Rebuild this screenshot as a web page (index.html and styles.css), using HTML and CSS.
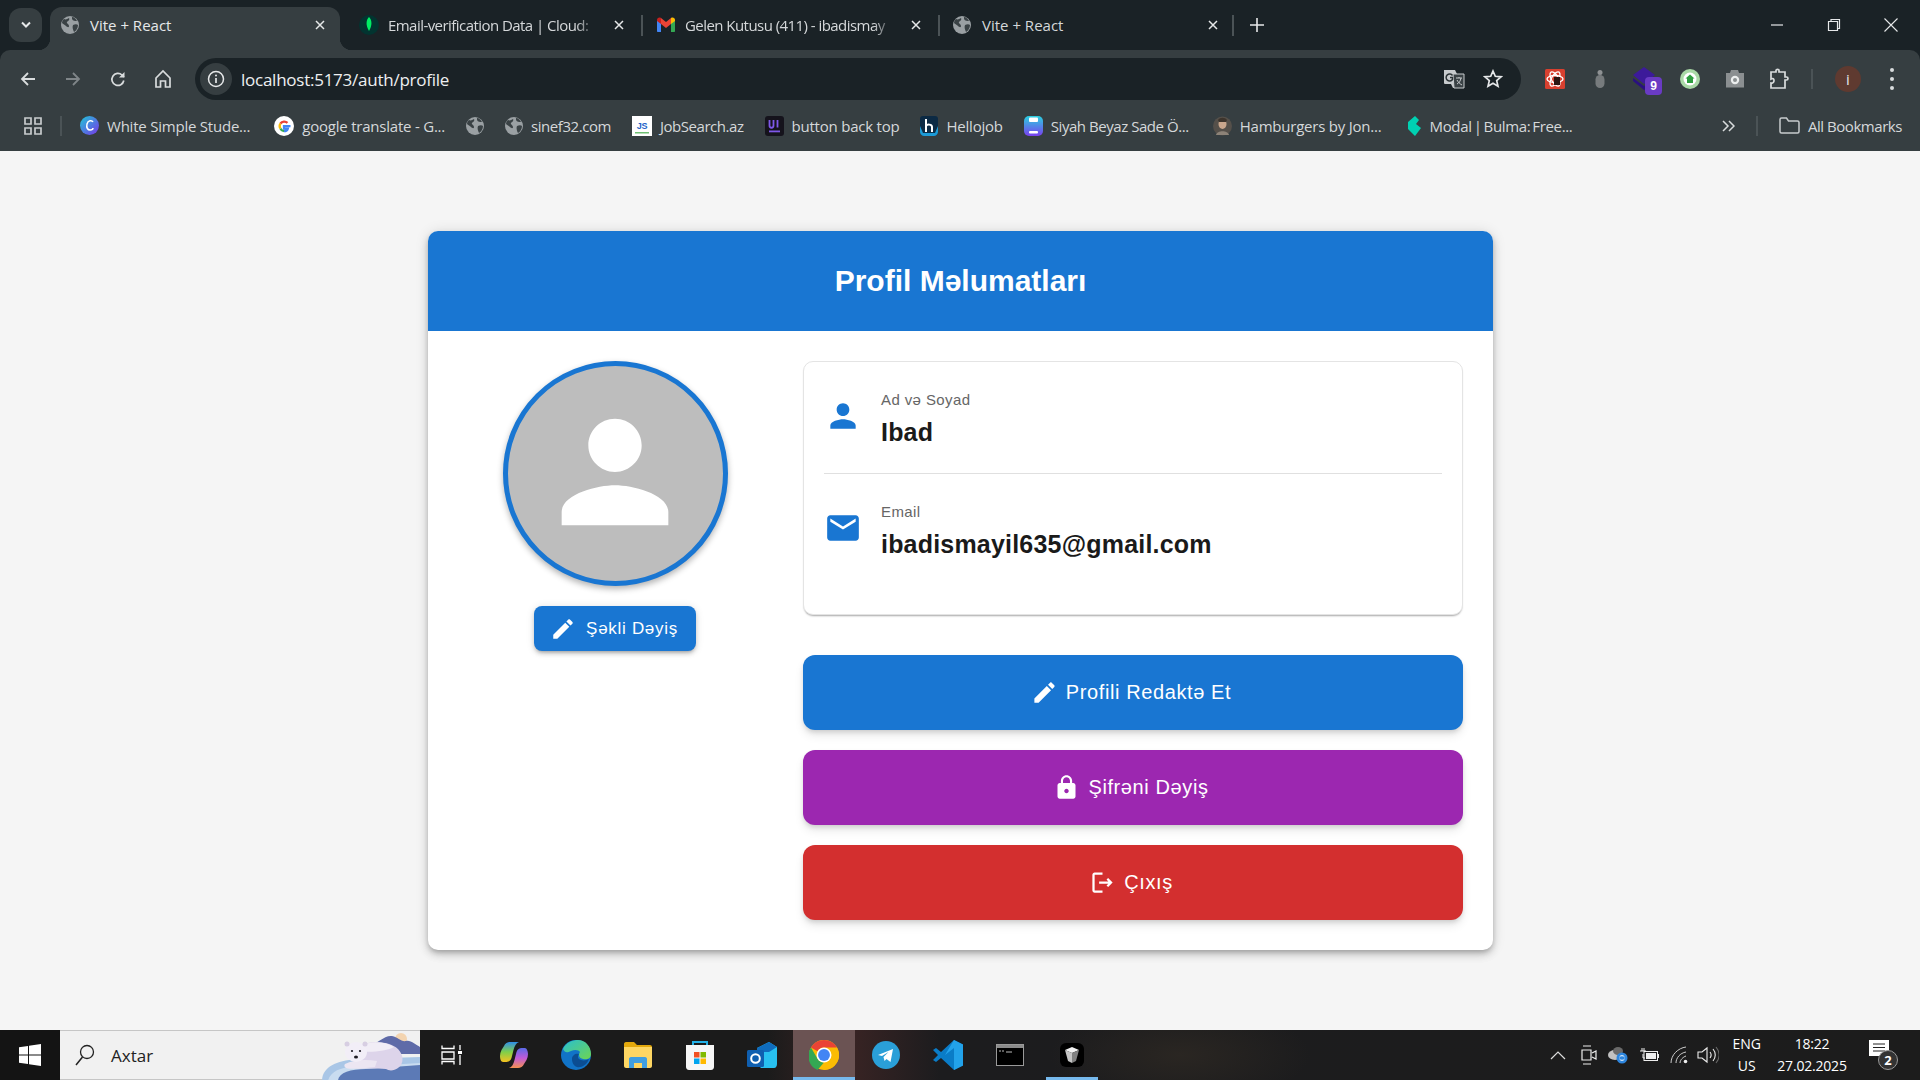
FILE: index.html
```html
<!DOCTYPE html>
<html lang="az">
<head>
<meta charset="utf-8">
<title>Vite + React</title>
<link rel="stylesheet" href="styles.css">
</head>
<body>
<svg class="defs" width="0" height="0">
  <symbol id="globe" viewBox="0 0 18 18"><circle cx="9" cy="9" r="9" fill="#9aa0a3"/><path d="M3 3c2 1 3 0 5-1 1 2-1 3-2 4s2 2 2 4-2 1-3 0-3-2-4-3c0-2 1-3 2-4zM12 9c2-1 4-1 5 0 0 3-2 6-4 7-1-2-2-5-1-7zM11 1c2 0 4 2 5 4-2 0-4 0-5-2z" fill="#3a4245"/></symbol>
  <symbol id="close" viewBox="0 0 12 12"><path d="M2 2l8 8M10 2l-8 8" fill="none" stroke="#e6e8e9" stroke-width="1.5"/></symbol>
  <symbol id="pencil" viewBox="0 0 24 24"><path d="M3 17.25V21h3.75L17.81 9.94l-3.75-3.75L3 17.25zM20.71 7.04c.39-.39.39-1.02 0-1.41l-2.34-2.34c-.39-.39-1.02-.39-1.41 0l-1.83 1.83 3.75 3.75 1.83-1.83z" fill="#fff"/></symbol>
  <symbol id="person" viewBox="0 0 24 24"><path d="M12 12c2.21 0 4-1.79 4-4s-1.79-4-4-4-4 1.79-4 4 1.79 4 4 4zm0 2c-2.67 0-8 1.34-8 4v2h16v-2c0-2.66-5.33-4-8-4z"/></symbol>
</svg>

<header class="browser">
  <div class="tabstrip">
    <div class="tabsearch"><svg width="12" height="8" viewBox="0 0 12 8"><path d="M2 1.5l4 4 4-4" fill="none" stroke="#e6e8e9" stroke-width="2"/></svg></div>
    <div class="tab tab-active">
      <svg class="fav" width="18" height="18"><use href="#globe"/></svg>
      <span class="tabtitle">Vite + React</span>
      <svg class="tabclose" width="12" height="12"><use href="#close"/></svg>
    </div>
    <div class="tab">
      <svg class="fav fav-wide" width="20" height="20" viewBox="0 0 20 20"><circle cx="10" cy="10" r="10" fill="#023430"/><path d="M10 2c3 3 3.500 8 0 14-3.500-6-3-11 0-14z" fill="#00ed64"/></svg>
      <span class="tabtitle tabtitle-fade">Email-verification Data | Cloud:</span>
      <svg class="tabclose" width="12" height="12"><use href="#close"/></svg>
    </div>
    <div class="tab tab-sep">
      <svg class="fav fav-wide" width="20" height="16" viewBox="0 0 20 16"><path d="M1 3v11c0 .6.400 1 1 1h3V6z" fill="#4285f4"/><path d="M19 3v11c0 .6-.4 1-1 1h-3V6z" fill="#34a853"/><path d="M15 1v6l4-3V3c0-2-2-3-4-2z" fill="#fbbc04"/><path d="M5 1v6l5 4 5-4V1l-5 4z" fill="#ea4335"/><path d="M1 3v1l4 3V1C3 0 1 1 1 3z" fill="#c5221f"/></svg>
      <span class="tabtitle tabtitle-fade">Gelen Kutusu (411) - ibadismay</span>
      <svg class="tabclose" width="12" height="12"><use href="#close"/></svg>
    </div>
    <div class="tab tab-sep tab-last">
      <svg class="fav" width="18" height="18"><use href="#globe"/></svg>
      <span class="tabtitle">Vite + React</span>
      <svg class="tabclose" width="12" height="12"><use href="#close"/></svg>
    </div>
    <div class="newtab"><svg width="14" height="14" viewBox="0 0 14 14"><path d="M7 0v14M0 7h14" stroke="#e6e8e9" stroke-width="1.600"/></svg></div>
    <div class="winctrls">
      <svg width="14" height="14" viewBox="0 0 14 14"><path d="M1 7h12" stroke="#e6e8e9" stroke-width="1.200"/></svg>
      <svg width="14" height="14" viewBox="0 0 14 14"><path d="M1.500 3.500h9v9h-9zM4 3.500V1.500h8.500v9h-2" fill="none" stroke="#e6e8e9" stroke-width="1.200"/></svg>
      <svg width="14" height="14" viewBox="0 0 14 14"><path d="M.5.500l13 13M13.500.500l-13 13" stroke="#e6e8e9" stroke-width="1.100"/></svg>
    </div>
  </div>

  <div class="toolbar">
    <div class="navcell"><svg width="18" height="18" viewBox="0 0 18 18"><path d="M16 9H3M9 3L3 9l6 6" fill="none" stroke="#d9dcdd" stroke-width="1.800"/></svg></div>
    <div class="navcell"><svg width="18" height="18" viewBox="0 0 18 18"><path d="M2 9h13M9 3l6 6-6 6" fill="none" stroke="#7f8588" stroke-width="1.800"/></svg></div>
    <div class="navcell"><svg width="18" height="18" viewBox="0 0 18 18"><path d="M14.800 10.500A6 6 0 1 1 13 5L15 7" fill="none" stroke="#d9dcdd" stroke-width="1.700"/><path d="M15.500 2v5.500H10z" fill="#d9dcdd"/></svg></div>
    <div class="navcell"><svg width="18" height="20" viewBox="0 0 18 20"><path d="M2 9l7-7 7 7v9h-4.500v-6h-5v6H2z" fill="none" stroke="#d9dcdd" stroke-width="1.700"/></svg></div>
    <div class="omnibox">
      <div class="siteinfo"><svg width="18" height="18" viewBox="0 0 18 18"><circle cx="9" cy="9" r="7.500" fill="none" stroke="#e6e8e9" stroke-width="1.500"/><path d="M9 8v5" stroke="#e6e8e9" stroke-width="1.700"/><circle cx="9" cy="5.500" r="1" fill="#e6e8e9"/></svg></div>
      <span class="url">localhost:5173/auth/profile</span>
      <div class="omni-right">
        <svg width="22" height="22" viewBox="0 0 22 22"><path d="M1 2h11l2 4h5c1 0 2 1 2 2v12H10l-2-4H2c-1 0-1-1-1-1z" fill="#c7cbcd"/><path d="M10 6h11v14H11z" fill="#3a4245" stroke="#c7cbcd"/><path d="M9.500 7.500A3.500 3.500 0 1 0 9.500 11.500V9.500H7" fill="none" stroke="#2b3336" stroke-width="1.500"/><path d="M13 10h6M16 9v1M18 10c-.5 3-2 5-4 6M14 12c1 2 3 4 5 5" fill="none" stroke="#c7cbcd" stroke-width="1"/></svg>
        <svg width="20" height="20" viewBox="0 0 20 20"><path d="M10 2l2.300 5.300 5.700.500-4.300 3.800 1.300 5.600L10 14.300l-5 2.900 1.300-5.600L2 7.800l5.700-.5z" fill="none" stroke="#e6e8e9" stroke-width="1.700"/></svg>
      </div>
    </div>
    <div class="extensions">
      <div class="navcell"><svg width="20" height="20" viewBox="0 0 20 20"><rect width="20" height="20" rx="1.500" fill="#d8402f"/><g fill="none" stroke="#fff" stroke-width="1.300"><ellipse cx="10" cy="10" rx="8" ry="3.500"/><ellipse cx="10" cy="10" rx="8" ry="3.500" transform="rotate(60 10 10)"/><ellipse cx="10" cy="10" rx="8" ry="3.500" transform="rotate(120 10 10)"/></g><path d="M9 8h6v8H9z" fill="#2b1512"/></svg></div>
      <div class="navcell"><svg width="14" height="20" viewBox="0 0 14 20"><circle cx="7" cy="3.500" r="2.500" fill="#8e9193"/><rect x="2.500" y="6" width="9" height="13" rx="4.500" fill="#777b7d"/></svg></div>
      <div class="navcell ext-badged"><svg width="22" height="24" viewBox="0 0 22 24"><path d="M11 0l11 8-11 9L0 8z" fill="#3c1a9a"/><path d="M0 11l11 8 6-5v6l-6 3-11-9z" fill="#2a1080"/></svg><span class="badge">9</span></div>
      <div class="navcell"><svg width="20" height="20" viewBox="0 0 20 20"><circle cx="10" cy="10" r="10" fill="#a9d9a6"/><circle cx="10" cy="10" r="6.500" fill="#fff"/><path d="M10 5.500l4.500 4H13V14H7V9.500H5.500z" fill="#2e9e3f"/></svg></div>
      <div class="navcell"><svg width="20" height="18" viewBox="0 0 20 18"><path d="M1 3h4l1-3h7l1 3h5v14.500H1z" fill="#8b8f91"/><circle cx="10" cy="10" r="4.200" fill="#eceeee"/><circle cx="10" cy="10" r="2" fill="#8b8f91"/></svg></div>
      <div class="navcell"><svg width="22" height="22" viewBox="0 0 22 22"><path d="M2 4h5V2.500C7 1 10 1 10 2.500V4h6v5h1.500c2 0 2 3 0 3H16v8H2v-5c2 .5 3-1 3-2.500S4 10 2 11z" fill="none" stroke="#d9dcdd" stroke-width="1.700"/></svg></div>
      <span class="tool-sep"></span>
      <div class="avatar-chip">i</div>
      <div class="dots"><i></i><i></i><i></i></div>
    </div>
  </div>

  <nav class="bookmarks">
    <svg class="apps" width="18" height="18" viewBox="0 0 18 18"><path d="M1 1h6v6H1zM11 1h6v6h-6zM1 11h6v6H1zM11 11h6v6h-6z" fill="none" stroke="#c7cbcd" stroke-width="1.700"/></svg>
    <span class="bm-sep"></span>
    <a class="bm bm-pad"><svg width="19" height="19" viewBox="0 0 19 19"><defs><linearGradient id="cv" x1="0" y1="0" x2="1" y2="1"><stop offset="0" stop-color="#1ec8d8"/><stop offset="1" stop-color="#7a34e8"/></linearGradient></defs><circle cx="9.500" cy="9.500" r="9.500" fill="url(#cv)"/><path d="M13 6c-1-2-5-2-6 2s1 6 3 6 3-1 3-2" fill="none" stroke="#fff" stroke-width="1.500"/></svg><span>White Simple Stude...</span></a>
    <a class="bm"><svg width="20" height="20" viewBox="0 0 20 20"><circle cx="10" cy="10" r="10" fill="#fff"/><path d="M16.500 10.200H10v2.400h3.800c-.4 1.600-1.900 2.600-3.800 2.600" fill="none" stroke="#4285f4" stroke-width="2.300"/><path d="M6.400 12.500A4.800 4.800 0 0 0 10 15.200" fill="none" stroke="#34a853" stroke-width="2.300"/><path d="M6.400 12.500a4.800 4.800 0 0 1 0-5" fill="none" stroke="#fbbc04" stroke-width="2.300"/><path d="M6.400 7.500A4.800 4.800 0 0 1 13.500 6.800" fill="none" stroke="#ea4335" stroke-width="2.300"/></svg><span>google translate - G...</span></a>
    <a class="bm bm-iconly"><svg width="18" height="18"><use href="#globe"/></svg></a>
    <a class="bm"><svg width="18" height="18"><use href="#globe"/></svg><span class="bm-tight">sinef32.com</span></a>
    <a class="bm"><svg width="20" height="20" viewBox="0 0 20 20"><rect width="20" height="20" fill="#fff"/><text class="fav-js" x="10" y="13">JS</text><rect x="3" y="16" width="14" height="1.500" fill="#6fbf73"/></svg><span class="bm-tight">JobSearch.az</span></a>
    <a class="bm"><svg width="19" height="20" viewBox="0 0 19 20"><rect width="19" height="20" rx="3" fill="#15131c"/><path d="M4.500 4v5.500c0 3 4 3 4 0V4M12.500 4v7.500" fill="none" stroke="#7e57e8" stroke-width="1.800"/><rect x="4" y="14.500" width="11" height="1.800" fill="#7e57e8"/></svg><span>button back top</span></a>
    <a class="bm"><svg width="18" height="20" viewBox="0 0 18 20"><path d="M0 3c0-2 1-3 3-3h12c2 0 3 1 3 3v12c0 3-2 5-5 5H5c-3 0-5-2-5-5z" fill="#0c2a44"/><path d="M0 10l3 7h12l3-7v6c0 2-2 4-4 4H4c-2 0-4-2-4-4z" fill="#1c9ad6"/><path d="M6 3v13M6 10c1-2 6-2 6 1v5" fill="none" stroke="#fff" stroke-width="2"/></svg><span>Hellojob</span></a>
    <a class="bm bm-pad"><svg width="19" height="20" viewBox="0 0 19 20"><defs><linearGradient id="sy" x1="0" y1="0" x2="0" y2="1"><stop offset="0" stop-color="#2ad0df"/><stop offset="1" stop-color="#7a3ff0"/></linearGradient></defs><rect width="19" height="20" rx="5" fill="url(#sy)"/><rect x="5" y="1.500" width="9" height="4.500" rx="1" fill="#fff"/><rect x="5" y="15" width="9" height="2.500" rx="1" fill="#fff"/></svg><span class="bm-tight">Siyah Beyaz Sade Ö...</span></a>
    <a class="bm bm-pad"><svg width="19" height="20" viewBox="0 0 19 20"><circle cx="9.500" cy="10" r="9.500" fill="#55504a"/><ellipse cx="9.500" cy="8" rx="4" ry="5" fill="#c9a68c"/><path d="M5 4c2-3 7-3 9 0l-1 2H6z" fill="#3d342c"/><path d="M3 19c1-5 12-5 13 0z" fill="#8d8378"/></svg><span>Hamburgers by Jon...</span></a>
    <a class="bm"><svg width="16" height="20" viewBox="0 0 16 20"><path d="M2 6l7-6 4 4-3 4 5 4-6 8-7-7z" fill="#00d1b2"/></svg><span class="bm-modal">Modal | Bulma: Free...</span></a>
    <div class="bm-end">
      <svg width="14" height="12" viewBox="0 0 14 12"><path d="M2 1l5 5-5 5M8 1l5 5-5 5" fill="none" stroke="#d9dcdd" stroke-width="1.500"/></svg>
      <span class="bm-sep bm-sep-end"></span>
      <a class="bm"><svg width="21" height="17" viewBox="0 0 21 17"><path d="M1 2.500c0-.8.700-1.500 1.500-1.500h5l2 3h9c.8 0 1.500.7 1.500 1.500v9c0 .8-.7 1.500-1.500 1.500h-16C1.700 16 1 15.300 1 14.500z" fill="none" stroke="#c7cbcd" stroke-width="1.500"/></svg><span class="bm-tight">All Bookmarks</span></a>
    </div>
  </nav>
</header>

<main class="page">
  <section class="card">
    <h1 class="card-title">Profil Məlumatları</h1>
    <div class="card-body">
      <div class="avatar-col">
        <div class="avatar"><svg class="avatar-icon" width="160" height="160"><use href="#person"/></svg></div>
        <button class="btn-photo"><svg width="26" height="26"><use href="#pencil"/></svg><span>Şəkli Dəyiş</span></button>
      </div>
      <div class="detail-col">
        <div class="info">
          <div class="row row-first">
            <svg class="row-icon" width="38" height="38"><use href="#person"/></svg>
            <div><div class="row-label">Ad və Soyad</div><div class="row-value">Ibad</div></div>
          </div>
          <div class="row">
            <svg class="row-icon" width="38" height="38" viewBox="0 0 24 24"><path d="M20 4H4c-1.100 0-1.990.9-1.990 2L2 18c0 1.100.9 2 2 2h16c1.100 0 2-.9 2-2V6c0-1.100-.9-2-2-2zm0 4l-8 5-8-5V6l8 5 8-5v2z"/></svg>
            <div><div class="row-label">Email</div><div class="row-value">ibadismayil635@gmail.com</div></div>
          </div>
        </div>
        <div class="actions">
          <button class="btn btn-blue"><svg width="27" height="27"><use href="#pencil"/></svg><span>Profili Redaktə Et</span></button>
          <button class="btn btn-purple"><svg width="27" height="27" viewBox="0 0 24 24"><path fill="#fff" d="M18 8h-1V6c0-2.760-2.240-5-5-5S7 3.240 7 6v2H6c-1.100 0-2 .9-2 2v10c0 1.100.9 2 2 2h12c1.100 0 2-.9 2-2V10c0-1.100-.9-2-2-2zm-6 9c-1.100 0-2-.9-2-2s.9-2 2-2 2 .9 2 2-.9 2-2 2zm3.100-9H8.900V6c0-1.710 1.390-3.100 3.100-3.100 1.710 0 3.100 1.390 3.100 3.100v2z"/></svg><span>Şifrəni Dəyiş</span></button>
          <button class="btn btn-red"><svg width="27" height="27" viewBox="0 0 24 24"><path fill="#fff" d="M17 8l-1.410 1.410L17.170 11H9v2h8.170l-1.580 1.580L17 16l4-4zM5 5h7V3H5c-1.100 0-2 .9-2 2v14c0 1.100.9 2 2 2h7v-2H5V5z"/></svg><span>Çıxış</span></button>
        </div>
      </div>
    </div>
  </section>
</main>

<footer class="taskbar">
  <div class="start"><svg width="22" height="22" viewBox="0 0 22 22"><path d="M0 3.200l9-1.300v8.500H0zM10 1.800L22 0v10.400H10zM0 11.600h9v8.500l-9-1.300zM10 11.600h12V22l-12-1.800z" fill="#fff"/></svg></div>
  <div class="search">
    <svg width="22" height="24" viewBox="0 0 22 24"><circle cx="13" cy="9" r="6.500" fill="none" stroke="#222" stroke-width="1.300"/><path d="M8.500 14L2 22" stroke="#222" stroke-width="1.500"/></svg>
    <span>Axtar</span>
    <svg class="bear" width="98" height="50" viewBox="0 0 98 50">
      <circle cx="79" cy="8" r="6" fill="#f3d4b0"/>
      <path d="M46 15C56 13 62 4 70 5c6 1 9 6 14 5 5-1 10 4 14 6v7H50z" fill="#5f6ba8"/>
      <path d="M0 50c0-14 14-20 34-22l64-2v24z" fill="#a9c6e6"/>
      <path d="M6 50c2-9 12-14 26-14l66-4v18z" fill="#c9dcf0"/>
      <path d="M16 50c0-8 12-12 28-12l54-4v16z" fill="#5c7ab6"/>
      <path d="M34 16c10-6 32-7 42 2 6 6 6 15 0 19-4 3-9 3-12 1-10-1-24 0-30-1z" fill="#ddd4ea"/>
      <path d="M40 14c10-4 24-4 32 2-6 4-26 6-34 4z" fill="#f1edf6"/>
      <path d="M23 33c8-4 20-5 32-3l-2 6c-10 1-22 3-29 1-2-1-2-3-1-4z" fill="#ece6f2"/>
      <ellipse cx="34" cy="21" rx="11" ry="10" fill="#f2eef7"/>
      <circle cx="25" cy="13" r="2.500" fill="#d7cee2"/><circle cx="43" cy="13" r="2.500" fill="#d7cee2"/>
      <circle cx="30" cy="20" r="1.100" fill="#1d1a22"/><circle cx="38" cy="20" r="1.100" fill="#1d1a22"/><ellipse cx="34" cy="26" rx="2" ry="1.500" fill="#1d1a22"/>
    </svg>
  </div>
  <div class="apps-row">
    <div class="tb"><svg width="22" height="20" viewBox="0 0 22 20" fill="none" stroke="#fff" stroke-width="1.300"><path d="M1 .5v3h12v-3M1 19.500v-3h12v3M1 7h12v7H1zM19 0v5M19 10v10"/><rect x="17" y="6" width="4" height="3" fill="#fff" stroke="none"/></svg></div>
    <div class="tb"><svg width="28" height="28" viewBox="0 0 28 28"><defs><linearGradient id="co" x1="0" y1="0" x2="0" y2="1"><stop offset="0" stop-color="#2f8ee8"/><stop offset=".5" stop-color="#7fcf4a"/><stop offset="1" stop-color="#f5c21f"/></linearGradient><linearGradient id="cp" x1="0" y1="0" x2="0" y2="1"><stop offset="0" stop-color="#5a6ae8"/><stop offset=".5" stop-color="#c05ad8"/><stop offset="1" stop-color="#f59050"/></linearGradient></defs><path d="M10 1h9c-3 1-4.500 4-5.500 8l-2 8c-1 3-3 4-5 4H3C1 21 0 18 0 15c0-2 .5-4 1.500-6L4 5c1-2.500 3.500-4 6-4z" fill="url(#co)"/><path d="M18 27H9c3-1 4.500-4 5.500-8l2-8c1-3 3-4 5-4H25c1.500 0 3 3 3 6 0 2-.5 4-1.500 6L24 23c-1 2.500-3.500 4-6 4z" fill="url(#cp)"/></svg></div>
    <div class="tb"><svg width="30" height="30" viewBox="0 0 30 30"><defs><linearGradient id="ed" x1="0" y1="0" x2="1" y2="1"><stop offset="0" stop-color="#2ac0cf"/><stop offset="1" stop-color="#6ed450"/></linearGradient></defs><circle cx="15" cy="15" r="15" fill="#1173c7"/><path d="M2 9C5 2 12 0 17 0c8 0 13 7 13 14 0 5-5 6-8 5-4-1-5-4-3-7-1-2-5-3-9-1-4 2-6 2-8-2z" fill="url(#ed)"/><path d="M11 19c0-4 4-6 7-5-2 3-1 5 2 6 3 1 6 0 8-1-2 6-8 9-12 8-3-1-5-4-5-8z" fill="#0b4d92"/></svg></div>
    <div class="tb"><svg width="28" height="26" viewBox="0 0 28 26"><path d="M0 2c0-1 .6-2 2-2h8l3 3h13c1 0 2 .7 2 2v5H0z" fill="#e3a80c"/><path d="M0 5h28v19c0 1-1 2-2 2H2c-1 0-2-1-2-2z" fill="#fdd663"/><path d="M5 26v-9c0-1 .7-2 2-2h14c1.300 0 2 1 2 2v9h-5v-5h-8v5z" fill="#3f9ee0"/></svg></div>
    <div class="tb"><svg width="30" height="30" viewBox="0 0 30 30"><path d="M8 7V2h14v5" fill="none" stroke="#23b1e8" stroke-width="2"/><path d="M1 5h28v22c0 1.500-1 3-3 3H4c-2 0-3-1.500-3-3z" fill="#f6f6f6"/><rect x="9" y="12" width="5.500" height="5.500" fill="#f25022"/><rect x="15.500" y="12" width="5.500" height="5.500" fill="#7fba00"/><rect x="9" y="18.500" width="5.500" height="5.500" fill="#00a4ef"/><rect x="15.500" y="18.500" width="5.500" height="5.500" fill="#ffb900"/></svg></div>
    <div class="tb"><svg width="30" height="26" viewBox="0 0 30 26"><path d="M10 6l12-6 8 5v17c0 2-1 4-3 4H14l-4-4z" fill="#28c0f0"/><path d="M10 6l12-6 8 5-8 5h-12z" fill="#0f6cbd"/><rect y="8" width="17" height="17" rx="1.500" fill="#0f5fb0"/><circle cx="8.500" cy="16.500" r="4.300" fill="none" stroke="#fff" stroke-width="2"/></svg></div>
    <div class="tb tb-chrome"><svg width="30" height="30" viewBox="0 0 48 48"><circle cx="24" cy="24" r="24" fill="#fbbc04"/><path d="M24 0a24 24 0 0 1 20.800 12H24a12 12 0 0 0-10.400 6L3.200 12A24 24 0 0 1 24 0z" fill="#ea4335"/><path d="M3.200 12L13.600 30A12 12 0 0 0 24 36L13.600 48A24 24 0 0 1 3.200 12z" fill="#34a853"/><path d="M44.800 12A24 24 0 0 1 24 48L34.400 30a12 12 0 0 0 0-12z" fill="#fbbc04"/><circle cx="24" cy="24" r="12" fill="#fff"/><circle cx="24" cy="24" r="9.500" fill="#4285f4"/></svg></div>
    <div class="tb"><svg width="28" height="28" viewBox="0 0 28 28"><circle cx="14" cy="14" r="14" fill="#2a9fd8"/><path d="M6 14l15-6-2.500 13-4-3-2 2-1-4 5-5-6.500 4z" fill="#fff"/></svg></div>
    <div class="tb"><svg width="30" height="30" viewBox="0 0 30 30"><path d="M21 0l9 4.500v21L21 30 8 18l-5 4-3-2 5-5-5-5 3-2 5 4z" fill="#0a7cc7"/><path d="M21 0l9 4.500v21L21 30V8l-9 7z" fill="#22a2ea"/></svg></div>
    <div class="tb"><svg width="28" height="22" viewBox="0 0 28 22"><rect x=".5" y=".5" width="27" height="21" fill="#000" stroke="#9a9a9a"/><rect x="1" y="1" width="26" height="3" fill="#8b8b8b"/><path d="M3 7h2M6 7h2M10 8h6" stroke="#bbb"/></svg></div>
    <div class="tb tb-open"><svg width="24" height="24" viewBox="0 0 24 24"><rect width="24" height="24" rx="6" fill="#000"/><path d="M5 7l7-3 7 3-7 3z" fill="#f2f2f2"/><path d="M5 7l7 3v10l-4-2z" fill="#c5c5c5"/><path d="M19 7l-7 3v10l4-2z" fill="#818181"/></svg></div>
  </div>
  <div class="tray">
    <svg class="tray-chevron" width="16" height="10" viewBox="0 0 16 10"><path d="M1 9l7-7 7 7" fill="none" stroke="#ddd" stroke-width="1.200"/></svg>
    <svg width="16" height="20" viewBox="0 0 16 20"><path d="M2 1h8M2 19h8M1 5h9v10H1zM11 8l4-2v8l-4-2" fill="none" stroke="#eee" stroke-width="1.200"/></svg>
    <svg width="20" height="18" viewBox="0 0 20 18"><ellipse cx="7" cy="9" rx="7" ry="5" fill="#c2c2c2"/><ellipse cx="10" cy="5" rx="5" ry="4" fill="#6a6a6a"/><circle cx="14" cy="12" r="5.500" fill="#2e86de"/><path d="M11.500 11a3 3 0 0 1 5 0M16.500 13a3 3 0 0 1-5 0" fill="none" stroke="#fff"/></svg>
    <svg width="20" height="14" viewBox="0 0 20 14"><path d="M3 0v3M5 0v3M1 3h6M4 6v4h2" fill="none" stroke="#eee"/><rect x="5" y="3.500" width="13.500" height="9" fill="none" stroke="#eee"/><rect x="7" y="5" width="10" height="6" fill="#eee"/><rect x="19" y="6" width="1" height="4" fill="#eee"/></svg>
    <svg width="22" height="18" viewBox="0 0 22 18" fill="none" stroke="#ccc"><path d="M1 17C1 9 8 2 16 1M6 17c0-5 4-10 10-11M10 17c0-3 3-6 6-7"/><circle cx="15.500" cy="15.500" r="1.800" fill="#eee" stroke="none"/></svg>
    <svg class="tray-sound" width="22" height="18" viewBox="0 0 22 18" fill="none" stroke="#eee" stroke-width="1.100"><path d="M1 6h4l5-4v14l-5-4H1zM13 6c1.500 2 1.500 4 0 6M16 3c3 3.500 3 8.500 0 12"/><path d="M19 1c4 5 4 11 0 16" stroke="#666"/></svg>
    <div class="lang"><span>ENG</span><span>US</span></div>
    <div class="clock"><span>18:22</span><span>27.02.2025</span></div>
    <div class="notif">
      <svg width="21" height="18" viewBox="0 0 21 18"><path d="M0 0h20v16H0z" fill="#fff"/><path d="M4 4h12M4 7.500h12M4 11h12" stroke="#222"/></svg>
      <span class="notif-count">2</span>
    </div>
  </div>
</footer>
</body>
</html>
```

FILE: styles.css
```css
* { box-sizing: border-box; }
html, body { height: 100%; }
body {
  margin: 0;
  height: 100vh;
  overflow: hidden;
  display: flex;
  flex-direction: column;
  background: #f5f5f5;
  font-family: "Liberation Sans", Arial, sans-serif;
}
.defs { position: absolute; }
svg { display: block; flex: none; }

/* browser chrome */
.browser { flex: none; background: #1a2226; font-family: "Open Sans", "Noto Sans", sans-serif; }
.tabstrip { height: 50px; display: flex; align-items: flex-end; padding-left: 9px; color: #d5d8da; font-size: 15px; }
.tabsearch { width: 33px; height: 34px; margin: 0 8px 8px 0; border-radius: 12px; background: #363e41; display: flex; align-items: center; justify-content: center; }
.tab { position: relative; width: 297px; height: 43px; padding: 0 15px 8px 16px; display: flex; align-items: center; flex: none; }
.tab-active { width: 290px; padding: 0 14px 8px 11px; background: #363e41; border-radius: 12px 12px 0 0; margin-right: 3px; color: #e6e8e9; }
.tab-active::before, .tab-active::after { content: ""; position: absolute; bottom: 0; width: 12px; height: 12px; }
.tab-active::before { left: -12px; background: radial-gradient(circle at 0 0, transparent 12px, #363e41 12.5px); }
.tab-active::after { right: -12px; background: radial-gradient(circle at 100% 0, transparent 12px, #363e41 12.5px); }
.tab-sep::before { content: ""; position: absolute; left: 1px; top: 8px; width: 2px; height: 21px; background: #4b5356; }
.tab-last::after { content: ""; position: absolute; right: 0; top: 8px; width: 2px; height: 21px; background: #4b5356; }
.fav { margin-right: 11px; }
.fav-wide { margin-right: 9px; }
.tabtitle { flex: 1; min-width: 0; white-space: nowrap; letter-spacing: 0; }
.tabtitle-fade { -webkit-mask-image: linear-gradient(90deg, #000 90%, transparent 100%); mask-image: linear-gradient(90deg, #000 90%, transparent 100%); margin-right: 16px; letter-spacing: -.55px; }
.newtab { width: 14px; height: 14px; margin: 0 0 18px 16px; }
.winctrls { margin-left: auto; display: flex; gap: 43px; padding: 0 22px 18px 0; }

.toolbar { height: 58px; background: #363e41; border-radius: 10px 10px 0 0; padding: 8px 26px 0 5px; display: flex; align-items: flex-start; }
.navcell { width: 45px; height: 42px; display: flex; align-items: center; justify-content: center; flex: none; position: relative; }
.omnibox { flex: 1; height: 42px; margin-left: 10px; background: #1a2226; border-radius: 21px; display: flex; align-items: center; padding-left: 5px; }
.siteinfo { width: 32px; height: 32px; border-radius: 50%; background: #363e41; display: flex; align-items: center; justify-content: center; }
.url { margin-left: 9px; color: #eef0f1; font-size: 17px; letter-spacing: -.25px; }
.omni-right { margin-left: auto; display: flex; align-items: center; gap: 18px; padding-right: 18px; }
.extensions { margin-left: 11px; display: flex; align-items: center; height: 42px; }
.ext-badged { padding: 0 1px 0 0; }
.badge { position: absolute; left: 23px; top: 19px; width: 17px; height: 18px; background: #6a3bc4; border-radius: 4px; color: #fff; font: 700 12px/18px "Liberation Sans", sans-serif; text-align: center; }
.tool-sep { width: 2px; height: 20px; background: #4b5356; margin: 0 22px 0 9px; }
.avatar-chip { width: 26px; height: 26px; border-radius: 50%; background: #5f3a30; color: #e6e8e9; font-size: 15px; line-height: 26px; text-align: center; }
.dots { width: 4px; margin-left: 29px; display: flex; flex-direction: column; gap: 5px; }
.dots i { display: block; width: 4px; height: 4px; border-radius: 50%; background: #d9dcdd; }

.bookmarks { height: 43px; background: #363e41; padding: 0 18px 8px 24px; display: flex; align-items: center; gap: 21px; color: #d5d8da; font-size: 15px; }
.apps { margin-right: -3px; }
.bm-sep { width: 2px; height: 20px; background: #4b5356; margin-right: -3px; }
.bm { display: flex; align-items: center; gap: 8px; white-space: nowrap; letter-spacing: -.22px; }
.bm-pad { margin-right: 3px; }
.bm-tight { letter-spacing: -.45px; }
.bm-modal { letter-spacing: -.35px; word-spacing: -1.5px; }
.bm-end { margin-left: auto; display: flex; align-items: center; gap: 21px; }
.bm-sep-end { margin-right: 0; }
.fav-js { fill: #2563c9; font: 700 9px "Liberation Sans", sans-serif; text-anchor: middle; }

/* page */
.page { flex: 1; min-height: 0; display: flex; align-items: center; justify-content: center; padding-left: 1px; }
.card { width: 1065px; height: 719px; background: #fff; border-radius: 10px; overflow: hidden; box-shadow: 0 3px 5px -1px rgba(0,0,0,.2), 0 5px 8px 0 rgba(0,0,0,.14), 0 1px 14px 0 rgba(0,0,0,.12); }
.card-title { margin: 0; height: 100px; background: #1976d2; color: #fff; font-size: 30px; font-weight: 700; line-height: 100px; text-align: center; }
.card-body { padding: 30px; display: grid; grid-template-columns: 314px 660px; gap: 31px; }
.avatar-col { display: flex; flex-direction: column; align-items: center; gap: 20px; }
.avatar { width: 225px; height: 225px; border-radius: 50%; border: 5px solid #1976d2; background: #bdbdbd; display: flex; align-items: center; justify-content: center; box-shadow: 0 3px 6px rgba(0,0,0,.3); }
.avatar-icon { fill: #fff; margin: -4px 0 0 -1px; }
.btn-photo, .btn { border: 0; color: #fff; font-family: inherit; display: flex; align-items: center; justify-content: center; cursor: pointer; white-space: nowrap; }
.btn-photo { width: 162px; height: 45px; padding: 0 2px 0 0; gap: 10px; background: #1976d2; border-radius: 8px; font-size: 17px; letter-spacing: .7px; box-shadow: 0 3px 3px -2px rgba(0,0,0,.2), 0 3px 4px rgba(0,0,0,.14), 0 1px 8px rgba(0,0,0,.12); }
.detail-col { display: flex; flex-direction: column; }
.info { height: 254px; padding: 20px; background: #fff; border-radius: 10px; border: 1px solid #e4e4e4; box-shadow: 0 2px 2px -1px rgba(0,0,0,.35); }
.row { height: 91px; padding: 7px 0 0 0; display: flex; align-items: center; gap: 19px; }
.row > div { align-self: flex-start; }
.row-first { border-bottom: 1px solid #e0e0e0; height: 92px; margin-bottom: 20px; }
.row-icon { fill: #1976d2; margin: -30px 0 0 0; }
.row-label { font-size: 15px; line-height: 22px; color: #666; letter-spacing: .4px; }
.row-value { margin-top: 6px; font-size: 25px; line-height: 31px; font-weight: 700; color: #1a1a1a; letter-spacing: .2px; }
.actions { margin-top: 40px; display: flex; flex-direction: column; gap: 20px; }
.btn { height: 75px; gap: 8px; padding-right: 10px; border-radius: 12px; font-size: 20px; letter-spacing: .6px; box-shadow: 0 3px 5px -1px rgba(0,0,0,.15), 0 6px 10px 0 rgba(0,0,0,.08); }
.btn-blue { background: #1976d2; }
.btn-purple { background: #9c27b0; }
.btn-red { background: #d32f2f; }

/* taskbar */
.taskbar { flex: none; height: 50px; display: flex; align-items: stretch; font-family: "Open Sans", "Noto Sans", sans-serif; background: radial-gradient(ellipse 130px 50px at 1180px 50%, #2a2622, transparent), linear-gradient(90deg, #1b1b1b 0, #1b1b1b 40%, #3a2424 44%, #1c1c1e 49%, #1c1c1c 100%); }
.start { width: 60px; background: #141414; display: flex; align-items: center; justify-content: center; }
.search { position: relative; width: 360px; background: #f1f1f1; border-top: 1px solid #c6c6c6; border-bottom: 1px solid #c6c6c6; display: flex; align-items: center; padding-left: 14px; color: #222; font-size: 17px; gap: 15px; }
.bear { position: absolute; right: 0; top: 0; }
.apps-row { display: flex; margin-left: 1px; }
.tb { width: 62px; display: flex; align-items: center; justify-content: center; position: relative; }
.tb-chrome { background: #6b5353; }
.tb-chrome::after, .tb-open::after { content: ""; position: absolute; left: 0; right: 0; bottom: 0; height: 3px; background: #76b9ed; }
.tb-open::after { left: 5px; right: 5px; }
.tray { margin-left: auto; display: flex; align-items: center; gap: 11px; color: #fff; padding-right: 27px; }
.tray-chevron { margin-right: 4px; }
.tray-sound { margin-left: -6px; }
.lang, .clock { display: flex; flex-direction: column; align-items: center; font-size: 14px; line-height: 22px; }
.lang { margin: 0 5px 0 3px; }
.clock { width: 70px; margin-right: 11px; letter-spacing: -.2px; }
.notif { position: relative; width: 24px; height: 30px; }
.notif-count { position: absolute; left: 9px; top: 10px; width: 20px; height: 20px; border-radius: 50%; border: 1px solid #999; background: #333; color: #fff; font-size: 13px; line-height: 18px; text-align: center; font-weight: 700; }
```
